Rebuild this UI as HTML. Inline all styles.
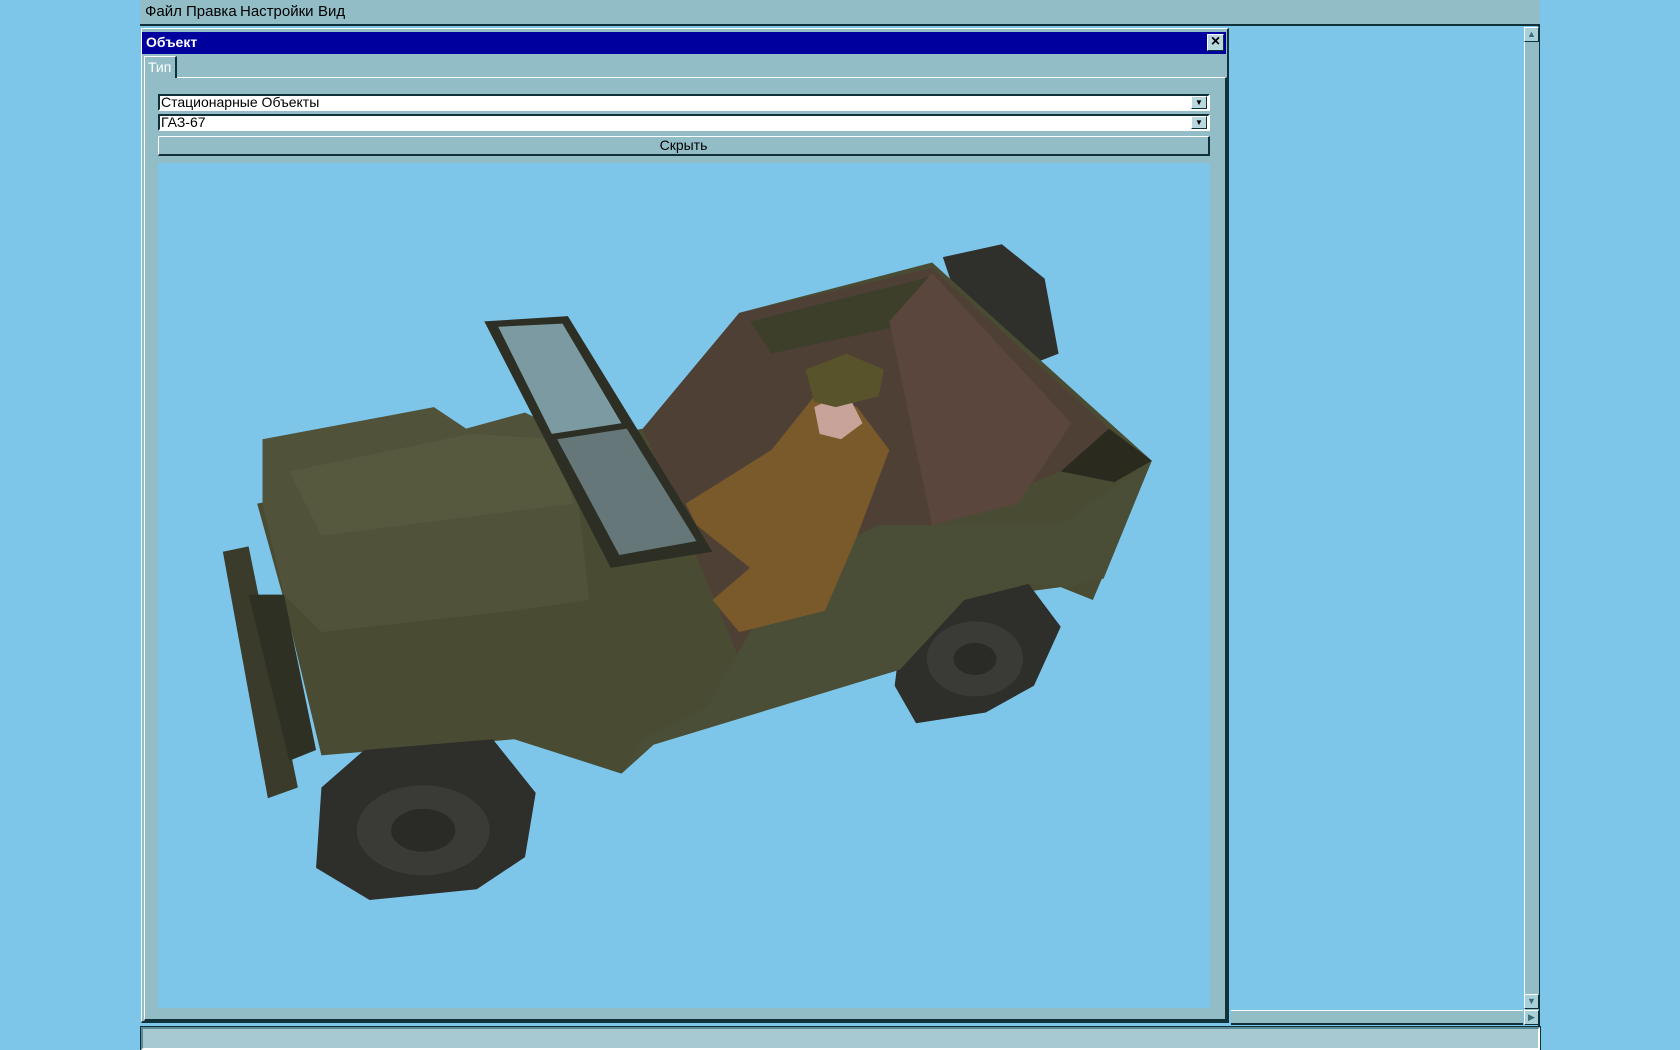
<!DOCTYPE html>
<html><head><meta charset="utf-8"><style>
*{margin:0;padding:0;box-sizing:border-box}
body{width:1680px;height:1050px;background:#7dc6ea;position:relative;overflow:hidden;font-family:"Liberation Sans","DejaVu Sans",sans-serif;font-size:14px}
.abs{position:absolute}
.menu{left:140px;top:0;width:1400px;height:26px;background:#93bdc6;border-bottom:2px solid #10303a}
.menu span{position:absolute;top:3px;font-size:15px;color:#000}
.win{left:141px;top:28px;width:1088px;height:995px;background:#93bdc6;border:1px solid #fff;border-right:2px solid #10303a;border-bottom:2px solid #10303a}
.title{left:142px;top:32px;width:1084px;height:22px;background:#00009f;color:#fff;font-weight:bold;font-size:14px;padding:2px 4px}
.close{left:1207px;top:34px;width:17px;height:17px;background:#b8d8de;border:1px solid #fff;border-right-color:#10303a;border-bottom-color:#10303a;font:bold 16px "Liberation Sans",sans-serif;text-align:center;line-height:14px;color:#000}
.tab{left:144px;top:56px;width:33px;height:22px;border-left:1px solid #fff;border-top:1px solid #fff;border-right:2px solid #10303a;color:#fff;font-size:14px;padding:2px 3px;background:#93bdc6;z-index:2}
.panel{left:144px;top:77px;width:1083px;height:944px;border-top:1px solid #fff;border-left:1px solid #fff;border-right:2px solid #10303a;border-bottom:2px solid #10303a}
.combo{left:158px;width:1052px;height:17px;background:#fff;border:2px solid #10303a;border-right-color:#fff;border-bottom-color:#fff;font-size:14px;line-height:13px;padding-left:1px;color:#000}
.dd{position:absolute;right:1px;top:0;width:16px;height:13px;background:#b8d8de;border:1px solid #fff;border-right-color:#10303a;border-bottom-color:#10303a;font-size:8px;text-align:center;line-height:11px}
.btn{left:158px;top:136px;width:1052px;height:20px;border:1px solid #fff;border-right:2px solid #10303a;border-bottom:2px solid #10303a;text-align:center;font-size:14px;line-height:16px;color:#000}
.view{left:158px;top:163px;width:1052px;height:845px;background:#7dc6ea}
.right{left:1229px;top:26px;width:311px;height:1000px;border-right:2px solid #10303a}
.vs{left:1524px;top:28px;width:15px;height:982px;background:#93bdc6;border-left:1px solid #fff}
.hs{left:1231px;top:1010px;width:292px;height:15px;background:#93bdc6;border-top:1px solid #fff;border-bottom:2px solid #10303a}
.sb{width:15px;height:15px;background:#a8d0d8;border:1px solid #fff;border-right-color:#10303a;border-bottom-color:#10303a;font-size:9px;text-align:center;line-height:13px;color:#3a6a78}
.status{left:141px;top:1027px;width:1399px;height:23px;background:#a6c9d2;border:2px solid #fff;border-top-color:#5a8a98;border-left-color:#5a8a98;outline:1px solid #10303a}
</style></head><body>
<div class="abs menu"><span style="left:5px">Файл</span><span style="left:46px">Правка</span><span style="left:100px">Настройки</span><span style="left:178px">Вид</span></div>
<div class="abs right"></div>
<div class="abs win"></div>
<div class="abs title">Объект</div>
<div class="abs close">×</div>
<div class="abs panel"></div>
<div class="abs tab">Тип</div>
<div class="abs combo" style="top:94px">Стационарные Объекты<div class="dd">▼</div></div>
<div class="abs combo" style="top:114px">ГАЗ-67<div class="dd">▼</div></div>
<div class="abs btn">Скрыть</div>
<div class="abs view"></div>
<svg class="abs" style="left:0;top:0" width="1680" height="1050" viewBox="0 0 1568 980" preserveAspectRatio="none">
<polygon points="880,240 935,228 975,260 988,330 950,345 900,300" fill="#2f2f2b"/>
<polygon points="240,470 600,400 690,292 870,245 1075,430 1020,560 990,548 900,560 840,625 610,695 580,722 480,690 300,705 265,560" fill="#494c33"/>
<polygon points="600,400 690,292 870,250 1035,400 990,440 870,490 780,575 690,615 650,520" fill="#4f4036"/>
<polygon points="700,300 870,258 860,300 720,330" fill="#3d3f2b"/>
<polygon points="830,300 870,255 1000,395 950,470 870,490" fill="#5a463c"/>
<polygon points="990,440 1035,400 1075,430 1040,450" fill="#2a2a1f"/>
<polygon points="245,410 405,380 435,400 490,385 520,400 540,470 550,560 480,570 300,590 265,555 245,470" fill="#50523a"/>
<polygon points="270,440 440,405 520,410 535,470 300,500" fill="#5a5c42" opacity="0.7"/>
<polygon points="208,515 232,510 278,735 250,745" fill="#3a3b2a"/>
<polygon points="232,555 265,555 295,700 270,710" fill="#2f3024"/>
<polygon points="300,735 340,700 460,690 500,740 490,800 445,830 345,840 295,810" fill="#2e2e2a"/>
<ellipse cx="395" cy="775" rx="62" ry="42" fill="#3a3b36"/>
<ellipse cx="395" cy="775" rx="30" ry="20" fill="#2a2a26"/>
<polygon points="840,600 880,555 960,545 990,585 965,640 920,665 855,675 835,640" fill="#2e2e2a"/>
<ellipse cx="910" cy="615" rx="45" ry="35" fill="#3a3b36"/>
<ellipse cx="910" cy="615" rx="20" ry="15" fill="#2a2a26"/>
<polygon points="820,490 990,490 1075,430 1030,540 995,548 960,545 900,560 840,625 610,695 580,722 600,690 660,660 700,590 760,520" fill="#4b4e36"/>
<polygon points="640,470 720,420 760,370 800,380 830,420 800,500 770,570 690,590 665,560 700,530 650,490" fill="#7a5a2a"/>
<polygon points="760,380 790,365 805,395 785,410 765,405" fill="#c8a39a"/>
<polygon points="752,345 790,330 825,345 820,370 780,380 760,375" fill="#58532a"/>
<polygon points="452,300 530,295 665,515 570,530" fill="#2d2f24"/>
<polygon points="465,305 525,302 580,395 515,405" fill="#7c9aa2"/>
<polygon points="520,410 585,400 650,505 578,518" fill="#66777a"/>
</svg>
<div class="abs vs"></div>
<div class="abs sb" style="left:1524px;top:27px">▲</div>
<div class="abs sb" style="left:1524px;top:994px">▼</div>
<div class="abs hs"></div>
<div class="abs sb" style="left:1524px;top:1010px">▶</div>
<div class="abs status"></div>
</body></html>
